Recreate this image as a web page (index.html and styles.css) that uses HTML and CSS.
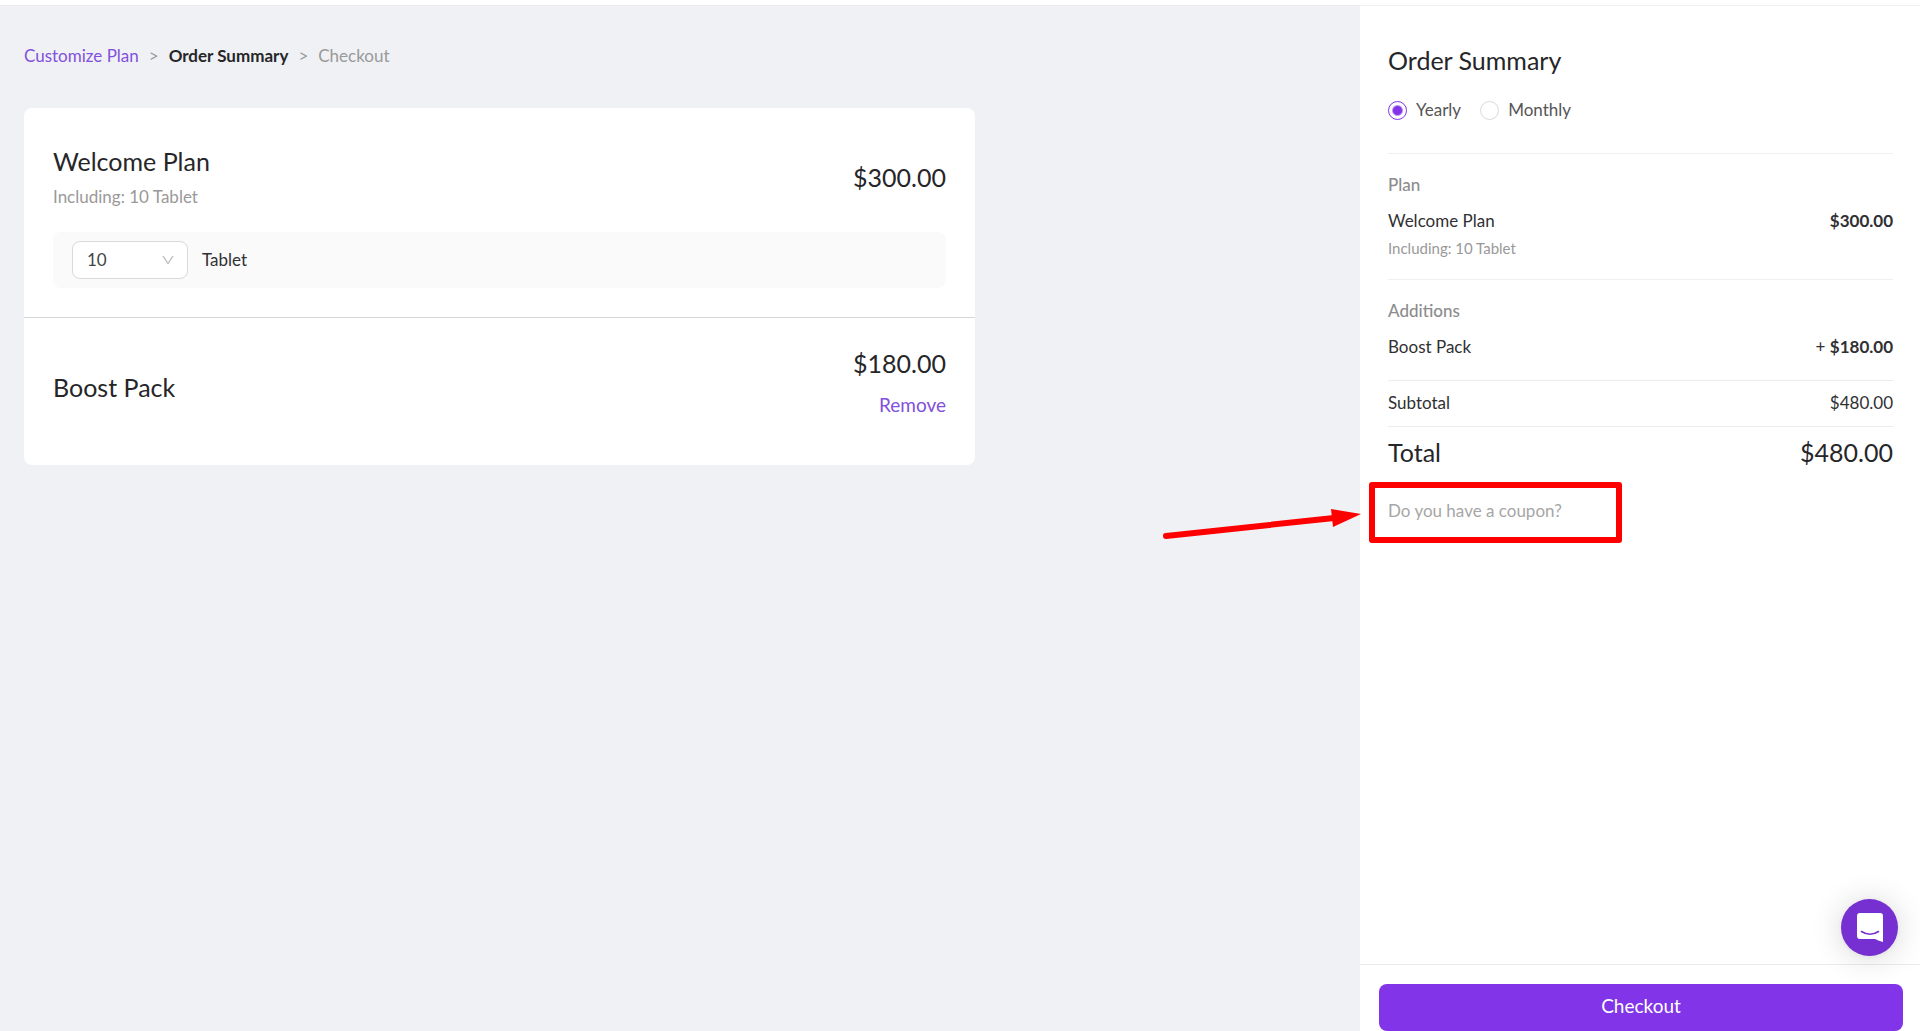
FILE: index.html
```html
<!DOCTYPE html>
<html lang="en">
<head>
  <meta charset="UTF-8">
  <meta name="viewport" content="width=device-width, initial-scale=1.0">
  <title>Order Summary</title>
  <link rel="stylesheet" href="styles.css">
</head>
<body>
  <div class="page">
    <main class="main">
      <nav class="breadcrumb">
        <a href="#">Customize Plan</a>
        <span class="sep">&gt;</span>
        <b>Order Summary</b>
        <span class="sep">&gt;</span>
        <span class="next">Checkout</span>
      </nav>
      <div class="cards">
        <section class="card">
          <div class="card-head">
            <div>
              <h2>Welcome Plan</h2>
              <p class="including">Including: 10 Tablet</p>
            </div>
            <div class="price">$300.00</div>
          </div>
          <div class="option">
            <div class="select">
              <select id="tablet">
                <option>10</option>
                <option>20</option>
                <option>30</option>
              </select>
              <svg class="arrow" viewBox="0 0 12 10" width="12" height="10">
                <path d="M1 1 L6 8.5 L11 1" fill="none" stroke="#b5b5b5" stroke-width="1.2"/>
              </svg>
            </div>
            <label for="tablet">Tablet</label>
          </div>
        </section>
        <section class="card addition">
          <h2>Boost Pack</h2>
          <div class="side">
            <div class="price">$180.00</div>
            <button class="remove" type="button">Remove</button>
          </div>
        </section>
      </div>
    </main>

    <aside class="sidebar">
      <div class="summary">
        <h2>Order Summary</h2>
        <div class="period">
          <label><input type="radio" name="period" checked>Yearly</label>
          <label><input type="radio" name="period">Monthly</label>
        </div>
        <div class="block">
          <h3>Plan</h3>
          <div class="row"><span>Welcome Plan</span><b>$300.00</b></div>
          <p class="small">Including: 10 Tablet</p>
        </div>
        <div class="block">
          <h3>Additions</h3>
          <div class="row"><span>Boost Pack</span><span>+ <b>$180.00</b></span></div>
        </div>
        <div class="row subtotal"><span>Subtotal</span><span>$480.00</span></div>
        <div class="row total"><span>Total</span><span>$480.00</span></div>
        <div class="coupon">
          <a href="#">Do you have a coupon?</a>
          <div class="mark"></div>
          <svg class="pointer" viewBox="0 0 200 34" width="200" height="34">
            <path d="M4 27 L172 9" fill="none" stroke="#f00" stroke-width="6" stroke-linecap="round"/>
            <path d="M169 0 L199 5 L171 18 Z" fill="#f00"/>
          </svg>
        </div>
      </div>
      <div class="footer">
        <button class="checkout" type="button">Checkout</button>
      </div>
    </aside>
  </div>

  <button class="chat" type="button" aria-label="Chat">
    <svg viewBox="0 0 26 29" width="26" height="29">
      <path d="M3 0 H23 Q26 0 26 3 V29 Q22 28 18 26 H3 Q0 26 0 23 V3 Q0 0 3 0 Z" fill="#fff"/>
      <path d="M4.500 18.500 Q13 24 21.500 18.500" fill="none" stroke="#762fd1" stroke-width="1.600" stroke-linecap="round"/>
    </svg>
  </button>
</body>
</html>
```

FILE: styles.css
```css
* {
  margin: 0;
  padding: 0;
  box-sizing: border-box;
}
body {
  font-family: Lato, "Open Sans", sans-serif;
  font-size: 17px;
  line-height: 24px;
  color: #303033;
  background-color: #fff;
}
a {
  text-decoration: none;
}
button, select {
  font: inherit;
}
button {
  border: none;
  cursor: pointer;
}
h2, .price, .total {
  font-size: 25px;
  line-height: 32px;
  font-weight: 400;
  color: #262629;
}
.page {
  display: flex;
  min-height: 100vh;
  padding-top: 5px;
}
.main {
  flex: 1;
  padding: 38px 0 38px 24px;
  background-color: #f0f1f5;
  border-top: 1px solid #ececef;
}
.breadcrumb {
  display: flex;
  margin-bottom: 40px;
}
.breadcrumb a, .remove {
  color: #8150dc;
}
.breadcrumb b {
  color: #262629;
}
.sep {
  margin: 0 10px;
  color: #999;
}
.next {
  color: #999;
}

/* cards */
.cards {
  width: 951px;
  max-width: 95%;
  border-radius: 8px;
  background-color: #fff;
}
.card {
  padding: 29px;
}
.card-head {
  display: flex;
  justify-content: space-between;
  align-items: center;
  padding-top: 8px;
  margin-bottom: 23px;
}
.including {
  margin-top: 8px;
  color: #999;
}
.option {
  display: flex;
  align-items: center;
  gap: 14px;
  padding: 9px 19px;
  border-radius: 8px;
  background-color: #fafafa;
}
.select {
  position: relative;
}
.select select {
  display: block;
  width: 116px;
  height: 38px;
  padding: 0 14px;
  border: 1px solid #d9d9d9;
  border-radius: 8px;
  background-color: #fff;
  color: #444;
  appearance: none;
}
.arrow {
  position: absolute;
  top: 14px;
  right: 14px;
  pointer-events: none;
}
.addition {
  display: flex;
  justify-content: space-between;
  align-items: center;
  border-top: 1px solid #d5d6d9;
  padding-bottom: 38px;
}
.side {
  display: flex;
  flex-direction: column;
  align-items: flex-end;
  gap: 14px;
  padding-bottom: 10px;
}
.remove {
  font-size: 19px;
  background-color: transparent;
}

/* sidebar */
.sidebar {
  display: flex;
  flex-direction: column;
  width: 560px;
  border-top: 1px solid #f0f0f0;
}
.summary {
  flex: 1;
  padding: 38px 27px 38px 28px;
}
.period {
  display: flex;
  gap: 19px;
  padding: 22px 0 31px;
  color: #555;
}
.period label {
  display: flex;
  align-items: center;
  gap: 9px;
}
.period input {
  width: 19px;
  height: 19px;
  border: 1px solid #d9d9d9;
  border-radius: 50%;
  appearance: none;
}
.period input:checked {
  border-color: #8134e8;
  background: radial-gradient(circle, #8134e8 4px, #fff 6px);
}
.block {
  padding: 19px 0 21px;
  border-top: 1px solid #f0f0f0;
}
.block h3 {
  margin-bottom: 12px;
  font-size: 17px;
  font-weight: 500;
  color: #8c8c8c;
}
.row {
  display: flex;
  justify-content: space-between;
}
.small {
  margin-top: 5px;
  font-size: 15px;
  line-height: 20px;
  color: #999;
}
.subtotal {
  padding: 10px 0 11px;
  border-top: 1px solid #ececec;
  border-bottom: 1px solid #ececec;
}
.total {
  padding-top: 9px;
}
.coupon {
  position: relative;
  margin-top: 31px;
}
.coupon a {
  color: #a6a6a6;
}
.mark {
  position: absolute;
  top: -17px;
  left: -19px;
  width: 253px;
  height: 61px;
  border: 6px solid #f00;
  border-radius: 3px;
  pointer-events: none;
}
.pointer {
  position: absolute;
  top: 10px;
  left: -226px;
}
.footer {
  padding: 19px 17px 0 19px;
  border-top: 1px solid #ebebeb;
}
.checkout {
  display: block;
  width: 100%;
  height: 47px;
  padding-bottom: 3px;
  border-radius: 8px;
  font-size: 19px;
  color: #fff;
  background-color: #8134e8;
}
.chat {
  position: fixed;
  right: 22px;
  bottom: 75px;
  display: flex;
  justify-content: center;
  align-items: center;
  width: 57px;
  height: 57px;
  border-radius: 50%;
  background-color: #762fd1;
  box-shadow: 0 2px 32px rgba(0, 0, 0, .16), 0 1px 6px rgba(0, 0, 0, .06);
}
```
